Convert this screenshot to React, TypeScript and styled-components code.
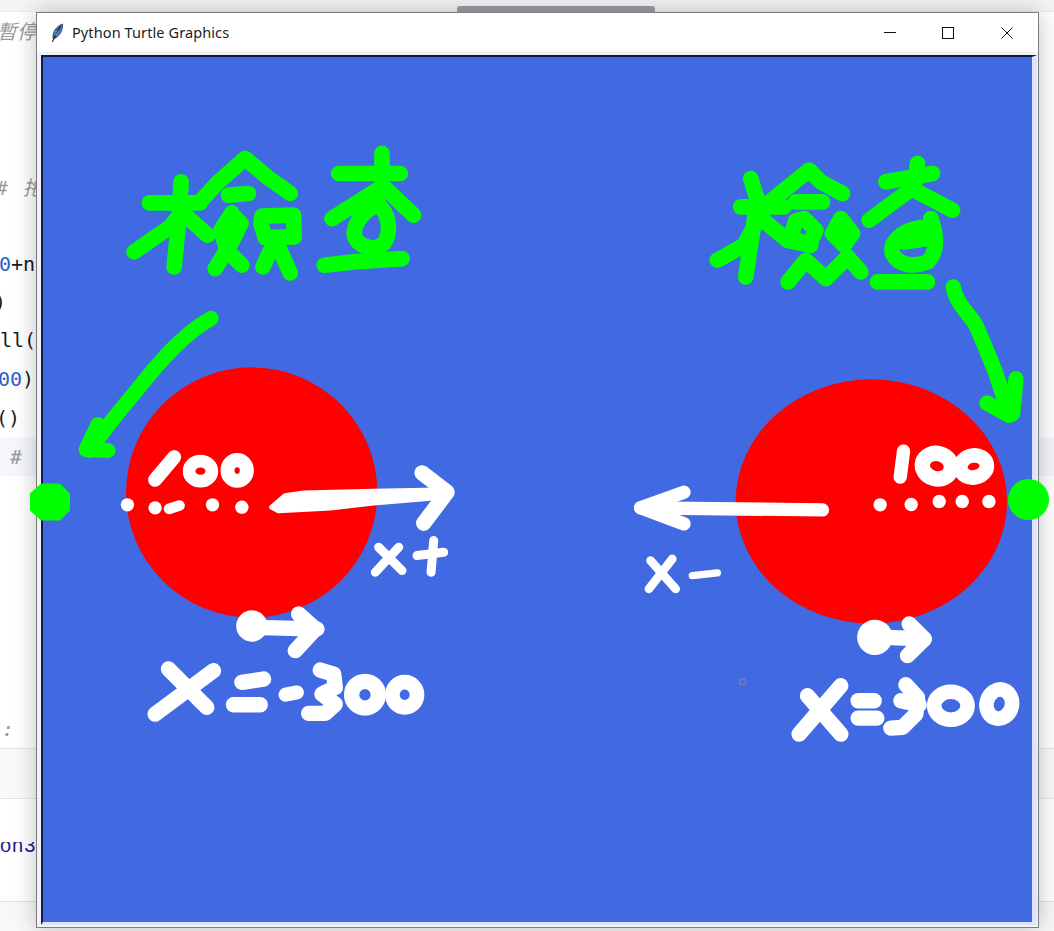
import styled, { createGlobalStyle } from 'styled-components';

const GREEN = '#00ff00';
const WHITE = '#ffffff';
const RED = '#ff0000';

const GlobalStyle = createGlobalStyle`
  html, body {
    margin: 0;
    padding: 0;
    background: #fff;
    overflow: hidden;
  }
`;

const Page = styled.div`
  position: relative;
  width: 1054px;
  height: 931px;
  overflow: hidden;
  background: #fff;
  display: flex;
  flex-direction: column;
`;

const TopBand = styled.div`
  height: 12px;
  flex: none;
  background: #f4f4f4;
  border-bottom: 1px solid #ececec;
  box-sizing: border-box;
`;

const ScrollThumb = styled.div`
  width: 198px;
  height: 6px;
  margin: 6px 0 0 457px;
  border-radius: 3px 3px 0 0;
  background: #9c9ca6;
`;

const CodeRow = styled.div<{ $height: number; $offset?: number; $active?: boolean }>`
  height: ${({ $height }) => $height}px;
  flex: none;
  line-height: ${({ $height }) => $height}px;
  padding-left: ${({ $offset = 0 }) => Math.max($offset, 0)}px;
  text-indent: ${({ $offset = 0 }) => Math.min($offset, 0)}px;
  background: ${({ $active }) => ($active ? '#f4f6fb' : 'transparent')};
  font-family: "DejaVu Sans Mono", "Noto Sans CJK TC", monospace;
  font-size: 20px;
  color: #1c1c1c;
  white-space: pre;
`;

const Comment = styled.span`
  font-style: italic;
  color: #9a9a9a;
  word-spacing: 3px;
`;

const Num = styled.span`
  color: #2d5fc9;
`;

const PanelBar = styled.div`
  height: 51px;
  flex: none;
  box-sizing: border-box;
  background: #fafafa;
  border-top: 1px solid #e6e6e6;
  border-bottom: 1px solid #e6e6e6;
`;

const ConsolePanel = styled.div`
  height: 103px;
  flex: none;
  box-sizing: border-box;
  padding-top: 43px;
  border-bottom: 1px solid #e2e2e2;
`;

const ConsoleText = styled.div`
  height: 11px;
  overflow: hidden;
  font-family: "Liberation Sans", sans-serif;
  font-size: 20px;
  line-height: 6px;
  letter-spacing: 1px;
  color: #1d1d8e;
  white-space: pre;
`;

const FooterBand = styled.div`
  flex: 1;
  background: #f8f8f8;
`;

const Window = styled.div`
  position: absolute;
  left: 36px;
  top: 12px;
  width: 1003px;
  height: 916px;
  box-sizing: border-box;
  display: flex;
  flex-direction: column;
  background: #f6f7fd;
  border: 1px solid #7c7c7c;
  box-shadow: 0 0 22px rgba(0, 0, 0, 0.24);
`;

const TitleBar = styled.div`
  height: 39px;
  flex: none;
  display: flex;
  align-items: center;
  background: #fff;
  padding: 0 2px 0 13px;
  border-bottom: 1px solid #ececec;
`;

const AppIcon = styled.svg`
  width: 14px;
  height: 20px;
  flex: none;
`;

const Title = styled.span`
  margin: 0 0 2px 8px;
  flex: 1;
  font-family: "Noto Sans", sans-serif;
  font-size: 14.5px;
  letter-spacing: 0.1px;
  color: #1d1d1d;
`;

const WinButton = styled.div`
  width: 58.5px;
  height: 38px;
  display: flex;
  align-items: center;
  justify-content: center;
  flex: none;
`;

const WinGlyph = styled.svg`
  width: 12px;
  height: 12px;
  fill: none;
  stroke: #111;
  stroke-width: 1;
  shape-rendering: crispEdges;
`;

const CanvasFrame = styled.div`
  flex: 1;
  min-height: 0;
  display: flex;
  padding: 2px 1px 2px 4px;
  background: #f1f2fb;
`;

const Canvas = styled.div`
  flex: 1;
  box-sizing: border-box;
  background: #4169e1;
  border-top: 2px solid #111a44;
  border-left: 2px solid #111a44;
  border-right: 5px solid #dfe4fb;
  border-bottom: 3px solid #dfe4fb;
`;

const Drawing = styled.svg`
  display: block;
  width: 100%;
  height: 100%;
  overflow: visible;
`;

const StrokeGroup = styled.g`
  fill: none;
  stroke-linecap: round;
  stroke-linejoin: round;
`;

const CHECK_LEFT = [
  'M88 188H240',
  'M183 125L175 250L162 380',
  'M42 335L150 260L190 210',
  'M195 225L262 285',
  'M240 185L290 130L375 55L440 110L510 160',
  'M325 165L385 160',
  'M335 222L362 250L335 305L285 385',
  'M335 218L302 270L320 330L365 375',
  'M425 228L520 225L522 290L435 292L422 250Z',
  'M460 310L428 380',
  'M470 310L510 398',
  'M655 100H840',
  'M785 40V150',
  'M785 140L635 235',
  'M790 140L880 225',
  'M775 190C725 215 700 250 702 285C710 320 765 335 790 310C810 285 810 235 785 205',
  'M612 375L700 365L845 355',
];

const CHECK_RIGHT = [
  'M120 170H250',
  'M150 85L170 150L150 280L135 380',
  'M50 330L130 285L165 220',
  'M175 200L260 270L330 285',
  'M190 170L250 120L325 60L360 95L425 130',
  'M285 155H365',
  'M285 212L270 260L325 285L345 240L310 205Z',
  'M420 205L455 250L430 285L395 250Z',
  'M262 395L315 330L375 385L440 320L480 365',
  'M555 95L695 70',
  'M650 40L640 110',
  'M640 110L505 210',
  'M640 120L755 180',
  'M690 205C705 250 715 300 680 335C640 352 590 345 575 310C565 280 600 240 660 232',
  'M610 275L680 265',
  'M530 395H680',
];

const Sketch = ({ x = 0, y = 0, scale = 1 / 3, color, width, strokes }: {
  x?: number;
  y?: number;
  scale?: number;
  color: string;
  width: number;
  strokes: string[];
}) => (
  <StrokeGroup transform={`translate(${x} ${y}) scale(${scale})`} stroke={color} strokeWidth={width}>
    {strokes.map(d => <path key={d} d={d} />)}
  </StrokeGroup>
);

const Dot = ({ cx, cy, r = 20 }: { cx: number; cy: number; r?: number }) => (
  <circle cx={cx} cy={cy} r={r} fill={WHITE} />
);

// ring drawn as a thick ellipse, the hand-drawn zeros barely keep a hole
const Zero = ({ cx, cy, rx, ry, w, rot = 0 }: { cx: number; cy: number; rx: number; ry: number; w: number; rot?: number }) => (
  <ellipse
    cx={cx}
    cy={cy}
    rx={rx}
    ry={ry}
    fill="none"
    stroke={WHITE}
    strokeWidth={w}
    transform={`rotate(${rot} ${cx} ${cy})`}
  />
);

const TurtleDrawing = () => (
  <Drawing viewBox="43 57 988 864" preserveAspectRatio="none">
    <ellipse cx={251.5} cy={492} rx={125.5} ry={125} fill={RED} />
    <ellipse cx={870.5} cy={501} rx={135.5} ry={122} fill={RED} />

    <Sketch x={120} y={140} color={GREEN} width={47} strokes={CHECK_LEFT} />
    <Sketch x={700} y={150} color={GREEN} width={47} strokes={CHECK_RIGHT} />
    <Sketch scale={1} color={GREEN} width={15} strokes={[
      'M211 318C185 332 160 360 135 392C118 412 102 432 90 450',
      'M98 424L86 449L108 450',
    ]} />
    <Sketch x={900} y={270} color={GREEN} width={46} strokes={[
      'M157 50C165 100 205 130 225 165C250 220 265 260 285 310L325 430',
      'M345 325L335 430',
      'M258 398L325 435',
    ]} />
    <polygon fill={GREEN} points="41,483 60,483 70,493 70,510 60,520 41,520 30,510 30,493" />
    <circle cx={1027.5} cy={499} r={20.5} fill={GREEN} />

    <g transform="translate(20 430) scale(0.3333)">
      <Dot cx={322} cy={223} />
      <Dot cx={405} cy={232} />
      <Dot cx={577} cy={223} />
      <Dot cx={665} cy={230} />
      <Zero cx={541} cy={122} rx={34} ry={30} w={38} />
      <Zero cx={651} cy={120} rx={29} ry={31} w={42} />
      <polygon
        fill={WHITE}
        stroke={WHITE}
        strokeWidth={16}
        strokeLinejoin="round"
        points="755,230 795,196 850,188 1060,183 1285,178 1285,198 1060,217 930,232 775,240"
      />
    </g>
    <Sketch x={20} y={430} color={WHITE} width={42} strokes={['M462 80L405 148']} />
    <Sketch x={20} y={430} color={WHITE} width={32} strokes={['M447 235L478 225']} />
    <Sketch x={20} y={430} color={WHITE} width={46} strokes={['M1205 127L1280 185L1210 278']} />
    <Sketch x={20} y={430} color={WHITE} width={27} strokes={[
      'M1075 350L1145 420',
      'M1135 350L1065 425',
      'M1190 375L1270 365',
      'M1240 330L1232 425',
    ]} />

    <g transform="translate(140 590) scale(0.3333)">
      <Dot cx={335} cy={106} r={47} />
      <Zero cx={674} cy={312} rx={40} ry={40} w={46} />
      <Zero cx={793} cy={312} rx={37} ry={38} w={44} />
    </g>
    <Sketch x={140} y={590} color={WHITE} width={46} strokes={[
      'M335 110L530 115',
      'M475 70L525 115L465 180',
      'M85 235L200 350',
      'M220 240L45 370',
      'M305 275L370 265',
      'M280 342H360',
      'M540 238L580 250L585 290L545 310L585 340L555 368L505 368',
    ]} />
    <Sketch x={140} y={590} color={WHITE} width={42} strokes={['M436 312L470 305']} />

    <g transform="translate(720 610) scale(0.3333)">
      <Dot cx={462} cy={80} r={53} />
      <Zero cx={690} cy={285} rx={50} ry={42} w={44} />
      <Zero cx={835} cy={280} rx={38} ry={44} w={44} rot={15} />
    </g>
    <Sketch x={720} y={610} color={WHITE} width={46} strokes={[
      'M500 80L610 85',
      'M565 40L610 85L560 135',
      'M260 255L360 370',
      'M360 225L235 370',
      'M412 270H460',
      'M412 322H468',
      'M555 222L590 260L585 310L545 350L510 352',
      'M540 270L595 282',
    ]} />
    <circle cx={742} cy={681} r={3} fill="none" stroke="#8b8b8b" strokeWidth={1} />

    <Sketch x={620} y={430} color={WHITE} width={40} strokes={[
      'M60 232L605 238',
      'M190 185L60 232L190 280',
      'M848 62L838 140',
    ]} />
    <Sketch x={620} y={430} color={WHITE} width={26} strokes={[
      'M90 390L165 475',
      'M155 385L85 475',
    ]} />
    <Sketch x={620} y={430} color={WHITE} width={22} strokes={['M215 435L290 427']} />
    <g transform="translate(620 430) scale(0.3333)">
      <Zero cx={948} cy={107} rx={44} ry={38} w={46} rot={15} />
      <Zero cx={1058} cy={108} rx={40} ry={33} w={44} rot={-10} />
      <Dot cx={778} cy={223} />
      <Dot cx={871} cy={222} />
      <Dot cx={955} cy={213} />
      <Dot cx={1024} cy={213} />
      <Dot cx={1104} cy={213} />
    </g>
  </Drawing>
);

const FeatherIcon = () => (
  <AppIcon viewBox="0 0 14 20">
    <path d="M12.6 1C8 2.4 3.8 6.6 3 12.4c-.2 1.6 0 2.8.5 3.6 3.6-1 7-4.6 8.4-9.2.6-2 .9-4 .7-5.8Z" fill="#3f74c4" stroke="#1f2f4f" strokeWidth={0.7} />
    <path d="M10.6 3.4C7.8 7 5.2 11.6 2.6 18.6" fill="none" stroke="#1b2233" strokeWidth={1.1} strokeLinecap="round" />
    <path d="M5 8.6l3 .6M4.4 11.4l3.6-.2" stroke="#a9c8ee" strokeWidth={0.7} />
  </AppIcon>
);

export default function App() {
  return (
    <Page>
      <GlobalStyle />
      <TopBand>
        <ScrollThumb />
      </TopBand>
      <CodeRow $height={40} $offset={-3}><Comment>暫停</Comment></CodeRow>
      <CodeRow $height={117} />
      <CodeRow $height={38} $offset={-4}><Comment># 拖動</Comment></CodeRow>
      <CodeRow $height={38} />
      <CodeRow $height={38} $offset={-1}><Num>0</Num>+n</CodeRow>
      <CodeRow $height={38} $offset={-6}>)</CodeRow>
      <CodeRow $height={39}>ll(</CodeRow>
      <CodeRow $height={38} $offset={-2}><Num>00</Num>)</CodeRow>
      <CodeRow $height={40} $offset={-4}>()</CodeRow>
      <CodeRow $height={38} $offset={10} $active><Comment>#</Comment></CodeRow>
      <CodeRow $height={234} />
      <CodeRow $height={38} $offset={2}><Comment>:</Comment></CodeRow>
      <PanelBar />
      <ConsolePanel>
        <ConsoleText>on3</ConsoleText>
      </ConsolePanel>
      <FooterBand />

      <Window>
        <TitleBar>
          <FeatherIcon />
          <Title>Python Turtle Graphics</Title>
          <WinButton>
            <WinGlyph viewBox="0 0 12 12"><path d="M0 5.5H12" /></WinGlyph>
          </WinButton>
          <WinButton>
            <WinGlyph viewBox="0 0 12 12"><rect x={0.5} y={0.5} width={11} height={11} /></WinGlyph>
          </WinButton>
          <WinButton>
            <WinGlyph viewBox="0 0 12 12"><path d="M0.5 0.5L11.5 11.5M11.5 0.5L0.5 11.5" style={{ shapeRendering: 'auto' }} /></WinGlyph>
          </WinButton>
        </TitleBar>
        <CanvasFrame>
          <Canvas>
            <TurtleDrawing />
          </Canvas>
        </CanvasFrame>
      </Window>
    </Page>
  );
}
